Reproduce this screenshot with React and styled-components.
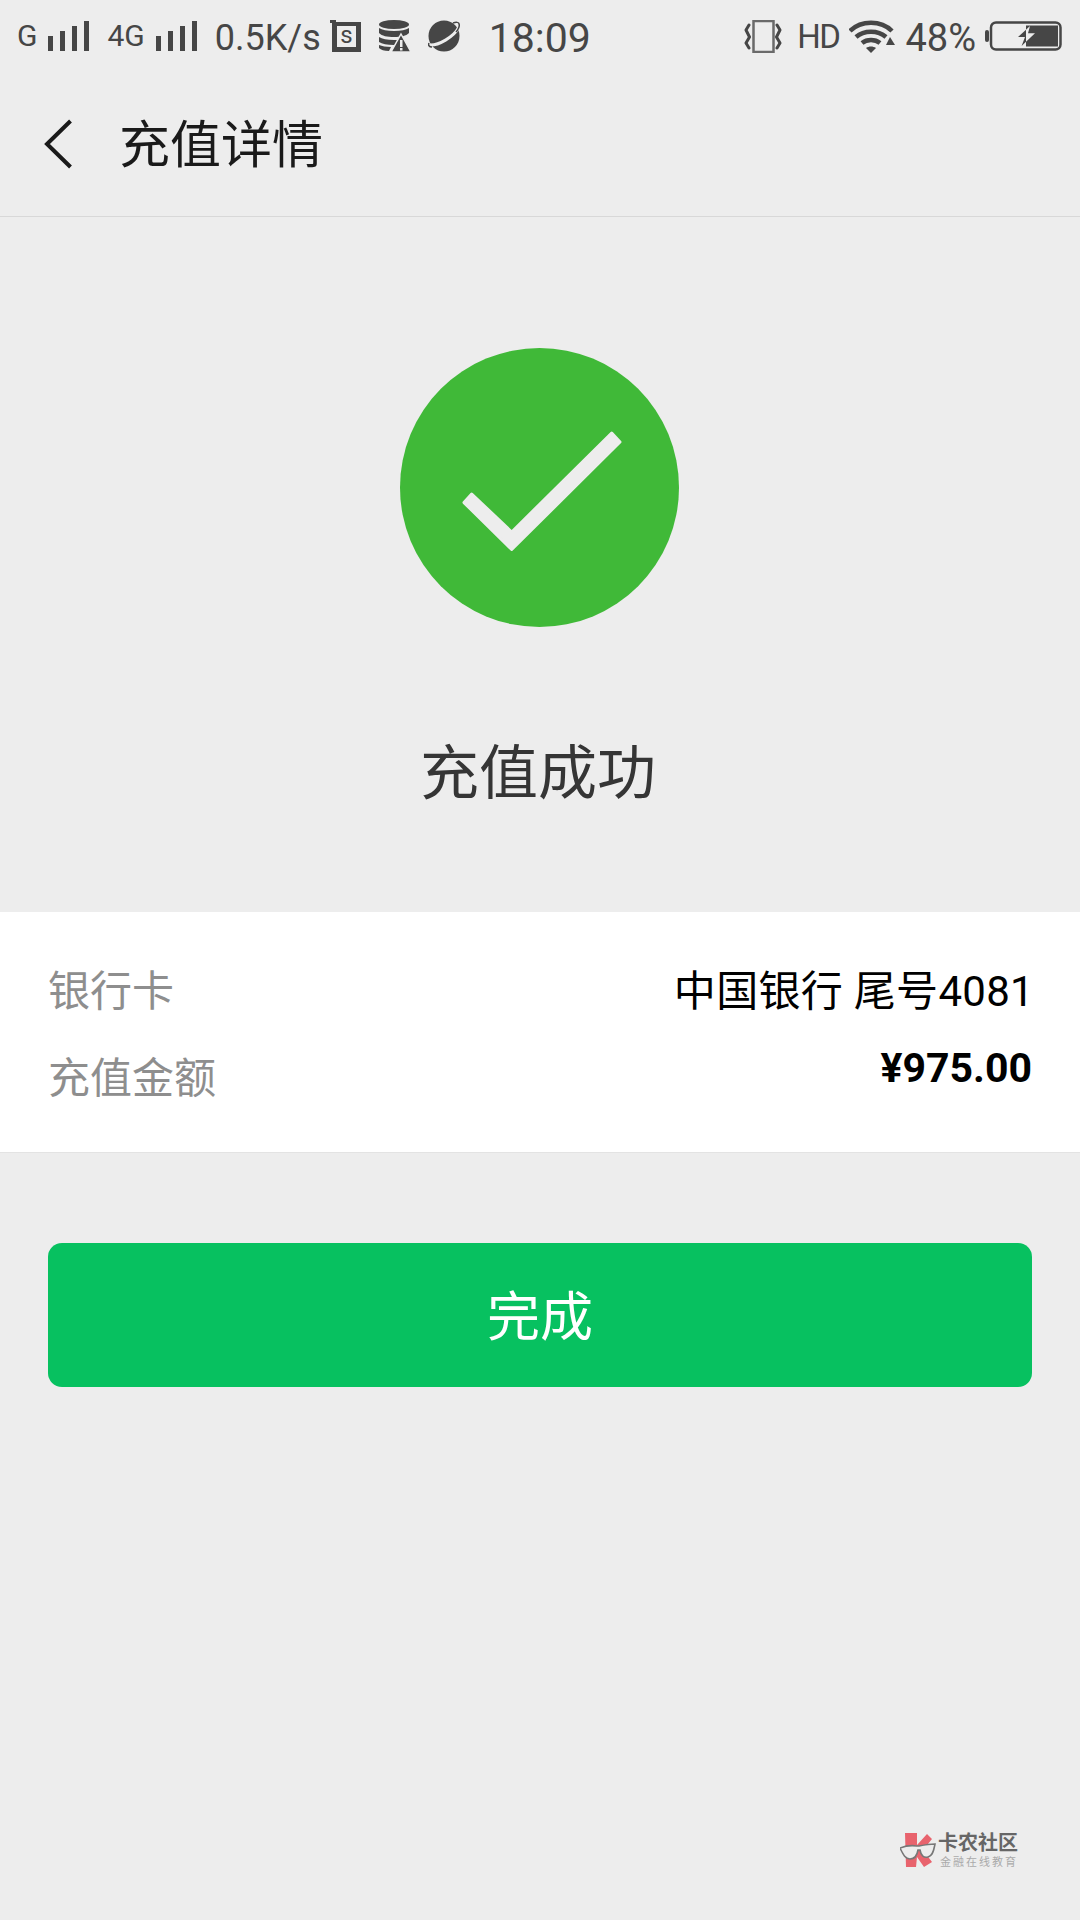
import styled, {createGlobalStyle} from 'styled-components';

const GlobalStyle = createGlobalStyle`
    html, body {
        margin: 0;
        padding: 0;
        background: #ededed;
    }
    body {
        font-family: Roboto, "Noto Sans CJK SC", sans-serif;
    }
`

const Page = styled.div`
    position: relative;
    width: 1080px;
    height: 1920px;
    overflow: hidden;
    background: #ededed;
`

/* status bar */
const StatusBar = styled.div`
    display: flex;
    align-items: center;
    justify-content: space-between;
    height: 72px;
    padding: 0 18px 0 17px;
    box-sizing: border-box;
    color: #464646;
`

const StatusGroup = styled.div`
    display: flex;
    align-items: center;
`

const StatusText = styled.span`
    font-size: ${(p) => p.$size || 30}px;
    line-height: 40px;
    margin-left: ${(p) => p.$left || 0}px;
    padding-top: ${(p) => p.$top || 0}px;
    letter-spacing: ${(p) => p.$spacing || 0}px;
    white-space: nowrap;
`

const StatusIcon = styled.svg`
    display: block;
    flex: none;
    margin-left: ${(p) => p.$left || 0}px;
`

function Signal({left}) {
    return (
        <StatusIcon $left={left} width="41" height="30" viewBox="0 0 41 30" fill="#464646">
            <rect x="0" y="15" width="5" height="15" />
            <rect x="12" y="10" width="5" height="20" />
            <rect x="24" y="5" width="5" height="25" />
            <rect x="36" y="0" width="5" height="30" />
        </StatusIcon>
    )
}

/* navigation */
const NavBar = styled.header`
    display: flex;
    align-items: center;
    height: 144px;
    padding-left: 44px;
    border-bottom: 1px solid #d8d8d8;
`

const BackIcon = styled.svg`
    display: block;
    margin-right: 46px;
`

const NavTitle = styled.h1`
    margin: 0;
    padding-top: 4px;
    font-size: 51px;
    line-height: 60px;
    font-weight: 400;
    color: #1a1a1a;
`

/* result */
const Result = styled.section`
    display: flex;
    flex-direction: column;
    align-items: center;
    padding-top: 131px;
    height: 695px;
    box-sizing: border-box;
`

const ResultIcon = styled.svg`
    display: block;
    margin-right: 1px;
`

const ResultTitle = styled.h2`
    margin: 107px 4px 0 0;
    font-size: 59px;
    line-height: 80px;
    font-weight: 400;
    color: #353535;
`

/* details card */
const Card = styled.div`
    height: 241px;
    padding: 32px 48px 0;
    box-sizing: border-box;
    background: #fff;
    border-bottom: 1px solid #e3e3e3;
`

const Row = styled.div`
    display: flex;
    align-items: center;
    justify-content: space-between;
    height: 87px;
`

const Label = styled.span`
    font-size: 42px;
    color: #8e8e8e;
`

const Value = styled.span`
    font-size: 42px;
    letter-spacing: 0.3px;
    margin-right: -2px;
    color: #000;
`

const Amount = styled.span`
    font-size: 41px;
    font-weight: 700;
    color: #000;
    padding-bottom: 14px;
`

const DoneButton = styled.button`
    display: block;
    width: 984px;
    height: 144px;
    margin: 90px 48px 0;
    padding: 0 0 4px;
    border: 0;
    border-radius: 14px;
    background: #07c160;
    color: #fff;
    font-family: inherit;
    font-size: 53px;
`

/* watermark */
const Watermark = styled.div`
    position: absolute;
    left: 900px;
    top: 1830px;
    display: flex;
    align-items: flex-start;
`

const WatermarkMark = styled.svg`
    display: block;
    margin-top: 3px;
`

const WatermarkText = styled.div`
    display: flex;
    flex-direction: column;
    margin-left: 2px;
`

const WatermarkName = styled.span`
    font-size: 20px;
    line-height: 26px;
    font-weight: 700;
    color: #666;
`

const WatermarkSub = styled.span`
    font-size: 11px;
    line-height: 14px;
    letter-spacing: 2px;
    color: #aaa;
    margin-left: 2px;
`

export default function App() {
    return (
        <Page>
            <GlobalStyle />
            <StatusBar>
                <StatusGroup>
                    <StatusText>G</StatusText>
                    <Signal left={11} />
                    <StatusText $left={18}>4G</StatusText>
                    <Signal left={11} />
                    <StatusText $size={36} $left={18} $top={3}>0.5K/s</StatusText>
                    <StatusIcon $left={9} width="31" height="32" viewBox="0 0 31 32">
                        <path d="M0 0h6v2h25v30H2V3H0z" fill="#464646" />
                        <rect x="7" y="6" width="19" height="21" fill="#ededed" />
                        <text x="16.5" y="23" fontSize="24" fontFamily="Roboto" textAnchor="middle" fill="#464646">s</text>
                    </StatusIcon>
                    <StatusIcon $left={18} width="32" height="32" viewBox="0 0 32 32" fill="#464646">
                        <ellipse cx="15" cy="4.5" rx="15" ry="4.5" />
                        <path d="M0 8c3 2 8 3 15 3s12-1 15-3v5c-3 3-8 4-15 4S3 16 0 13zM0 17c3 2 8 3 15 3h5l-3 5h-2C8 25 3 24 0 22zM0 25c3 1 7 2 12 2l-2 4c-5 0-8-1-10-3z" />
                        <path d="M22 14l10 18H12z" stroke="#ededed" strokeWidth="1.5" />
                        <rect x="21" y="20" width="2.5" height="7" fill="#ededed" />
                        <rect x="21" y="28" width="2.5" height="2.5" fill="#ededed" />
                    </StatusIcon>
                    <StatusIcon $left={17} width="32" height="32" viewBox="0 0 32 32">
                        <circle cx="16" cy="16" r="15.5" fill="#464646" />
                        <path d="M1 25c9 1 25-8 30-18" fill="none" stroke="#ededed" strokeWidth="3" />
                        <path d="M25 3c3-1 6-1 6 1 1 2-1 6-3 8M1 23c-1 2 0 4 3 4" fill="none" stroke="#464646" strokeWidth="1.5" />
                    </StatusIcon>
                    <StatusText $size={41} $left={29} $top={4}>18:09</StatusText>
                </StatusGroup>
                <StatusGroup>
                    <StatusIcon width="38" height="33" viewBox="0 0 38 33" fill="none">
                        <rect x="9.5" y="1" width="20" height="31" stroke="#6a6a6a" strokeWidth="2.5" />
                        <path d="M5 5 2 10 5.5 17 2 23 5 28M33 5l3 5-3.5 7 3.5 6-3 5" stroke="#464646" strokeWidth="3" strokeLinecap="round" strokeLinejoin="round" />
                    </StatusIcon>
                    <StatusText $size={33} $left={15} $spacing={-1.5} $top={2}>HD</StatusText>
                    <StatusIcon $left={10} width="46" height="33" viewBox="0 0 46 33" fill="none">
                        <path d="M1 11C12 0 32 0 43 11M7 17c8-7 22-7 30 0M13 23c5-4 13-4 18 0" stroke="#464646" strokeWidth="4.5" />
                        <path d="M17 28c3-2 7-2 10 0l-5 5z" fill="#464646" />
                        <path d="M41 17l5 8h-9z" fill="#464646" />
                    </StatusIcon>
                    <StatusText $size={38} $left={10} $top={3}>48%</StatusText>
                    <StatusIcon $left={9} width="77" height="30" viewBox="0 0 77 30" fill="none">
                        <rect x="0" y="9" width="4" height="12" rx="2" fill="#464646" />
                        <rect x="6" y="1.5" width="69.5" height="27" rx="5" stroke="#464646" strokeWidth="2.5" />
                        <rect x="41" y="4.5" width="32" height="21" fill="#464646" />
                        <path d="M41 8.7 33 16h7l-3.4 9 4.4-4.2z" fill="#464646" />
                        <path d="M41 8.7 45 5l-2 7.3h7L41 20.8z" fill="#ededed" />
                    </StatusIcon>
                </StatusGroup>
            </StatusBar>

            <NavBar>
                <BackIcon width="29" height="50" viewBox="0 0 29 50" fill="none">
                    <path d="M26.5 2 3 25l23.5 23" stroke="#1a1a1a" strokeWidth="4" />
                </BackIcon>
                <NavTitle>充值详情</NavTitle>
            </NavBar>

            <Result>
                <ResultIcon width="279" height="279" viewBox="0 0 279 279">
                    <circle cx="139.5" cy="139.5" r="139.5" fill="#40b938" />
                    <polygon points="64,154.6 71.7,146 111.7,184 211.7,85 220,94 111.7,201.5" fill="#ededed" stroke="#ededed" strokeWidth="3" strokeLinejoin="round" />
                </ResultIcon>
                <ResultTitle>充值成功</ResultTitle>
            </Result>

            <Card>
                <Row>
                    <Label>银行卡</Label>
                    <Value>中国银行 尾号4081</Value>
                </Row>
                <Row>
                    <Label>充值金额</Label>
                    <Amount>¥975.00</Amount>
                </Row>
            </Card>

            <DoneButton>完成</DoneButton>

            <Watermark>
                <WatermarkMark width="36" height="36" viewBox="0 0 36 36">
                    <path d="M5 0h12v12L27 1l5 5-9 11 9 12-8 5-7-10-1 10H6z" fill="#e8636d" />
                    <path d="M0 15c5-2 11-3 17-2h2c5-1 11-2 16-2-1 5-2 12-7 13-4 1-7-1-8-7h-2c-1 6-3 9-8 9-5 0-7-5-10-11z" fill="#ededed" stroke="#777" strokeWidth="1.6" />
                </WatermarkMark>
                <WatermarkText>
                    <WatermarkName>卡农社区</WatermarkName>
                    <WatermarkSub>金融在线教育</WatermarkSub>
                </WatermarkText>
            </Watermark>
        </Page>
    )
}
